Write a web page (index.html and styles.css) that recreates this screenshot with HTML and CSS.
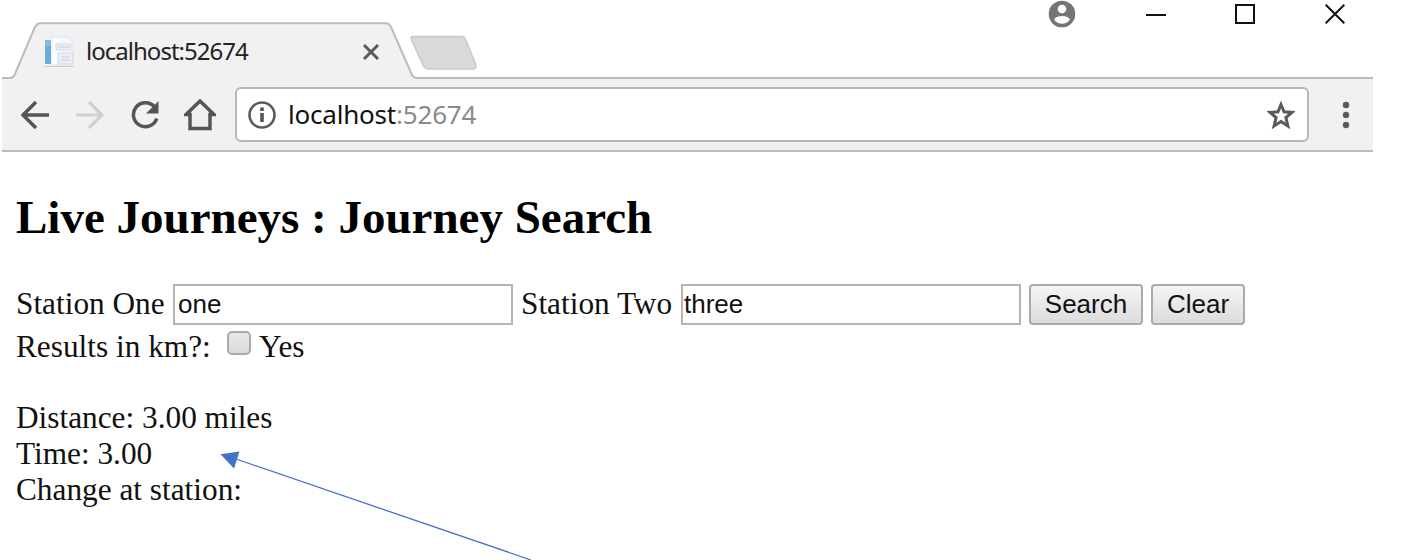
FILE: index.html
```html
<!DOCTYPE html>
<html lang="en">
<head>
<meta charset="utf-8">
<title>localhost:52674</title>
<link rel="stylesheet" href="styles.css">
</head>
<body>
<header class="browser">
  <div class="titlebar">
    <div class="tab">
      <svg class="tab-shape" width="490" height="80" viewBox="0 0 490 80">
        <path d="M0 80V78H8Q11 78 12.500 75L33 27Q35 23.200 38 23.200H384Q387 23.200 389 27L410 75Q411.500 78 415 78H490V80Z" fill="#f1f1f1"/>
        <path d="M0 78H8Q11 78 12.500 75L33 27Q35 23.200 38 23.200H384Q387 23.200 389 27L410 75Q411.500 78 415 78H490" fill="none" stroke="#bcbcbc" stroke-width="2"/>
        <path d="M411 36.500H460Q462.500 36.500 463.500 39L473.500 64Q475 69 471 69H427Q423 69 421.500 66L409.500 40Q408 36.500 411 36.500Z" fill="#d9d9d9" stroke="#c9c9c9" stroke-width="1.500"/>
      </svg>
      <svg class="favicon" width="32" height="32" viewBox="0 0 32 32">
        <path d="M7 2L9 1H23L29 7V29H7Z" fill="#f7f8fb" stroke="#e2e4e9"/>
        <path d="M1 4H7V28H1Z" fill="#68add9"/>
        <path d="M1 4H7V10H1Z" fill="#84bce1"/>
        <path d="M9 2H15V28H9Z" fill="#fcfdff"/>
        <path d="M12 8H27V14H12ZM14 17H29V28H14Z" fill="#eceef5" stroke="#d4d7e2"/>
        <path d="M14 11H26M17 21H26M17 24H26" stroke="#d3d7e4" stroke-width="1.500"/>
        <path d="M0 30.500H30" stroke="#c8ccd2"/>
      </svg>
      <span class="tab-title">localhost:52674</span>
      <svg class="tab-close" width="18" height="18" viewBox="0 0 18 18"><path d="M2 2L16 16M16 2L2 16" stroke="#5a5a5a" stroke-width="3"/></svg>
    </div>
    <div class="window-controls">
      <svg width="28" height="28" viewBox="0 0 28 28">
        <circle cx="14" cy="14" r="13.300" fill="#757575"/>
        <circle cx="14" cy="9" r="4.300" fill="#fff"/>
        <path d="M6 19.500C7.500 16.800 11 16 14 16S20.500 16.800 22 19.500C20 22.400 17 23.700 14 23.700S8 22.400 6 19.500Z" fill="#fff"/>
      </svg>
      <svg width="20" height="28" viewBox="0 0 20 28"><path d="M0 15H20" stroke="#111" stroke-width="2"/></svg>
      <svg width="20" height="28" viewBox="0 0 20 28"><path d="M1 5H19V23H1Z" fill="none" stroke="#111" stroke-width="2"/></svg>
      <svg width="20" height="28" viewBox="0 0 20 28"><path d="M.7 4.700L19.300 23.300M19.300 4.700L.7 23.300" stroke="#111" stroke-width="2"/></svg>
    </div>
  </div>
  <div class="toolbar">
    <svg class="nav" width="28" height="28" viewBox="0 0 28 28"><path d="M28 14H2M15 1L2 14L15 27" fill="none" stroke="#555" stroke-width="3.500"/></svg>
    <svg class="nav" width="28" height="28" viewBox="0 0 28 28"><path d="M0 14H26M13 1L26 14L13 27" fill="none" stroke="#d0d0d0" stroke-width="3.200"/></svg>
    <svg class="nav" width="28" height="28" viewBox="0 0 28 28"><path d="M23.500 5.800A12 12 0 1 0 25.800 17.500" fill="none" stroke="#555" stroke-width="3.500"/><path d="M27.500 0V12.500H15Z" fill="#555"/></svg>
    <svg class="nav-home" width="32" height="32" viewBox="0 0 32 32"><path d="M2 15.500L16 2L30 15.500H26V29.500H6V15.500Z" fill="none" stroke="#555" stroke-width="3.500"/></svg>
    <div class="address">
      <svg class="info" width="28" height="28" viewBox="0 0 28 28"><circle cx="14" cy="14" r="12.500" fill="none" stroke="#5a5a5a" stroke-width="2.600"/><path d="M14 12V21M14 6.500V10" stroke="#555" stroke-width="3.600"/></svg>
      <span class="url">localhost<span class="port">:52674</span></span>
      <svg class="star" width="28" height="28" viewBox="0 0 28 28"><path d="M14 3.500L17 10.800L25 11.400L18.900 16.500L20.900 25L14 20.600L7.100 25L9.100 16.500L3 11.400L11 10.800Z" fill="none" stroke="#5a5a5a" stroke-width="3"/></svg>
    </div>
    <svg class="menu" width="8" height="28" viewBox="0 0 8 28"><g fill="#5a5a5a"><circle cx="4" cy="4" r="3.200"/><circle cx="4" cy="14" r="3.200"/><circle cx="4" cy="24" r="3.200"/></g></svg>
  </div>
</header>
<main class="page">
  <h2 class="heading">Live Journeys : Journey Search</h2>
  <form class="search">
    <label class="label-one" for="one">Station One</label>
    <input class="field" id="one" type="text" value="one">
    <label class="label-two" for="two">Station Two</label>
    <input class="field" id="two" type="text" value="three">
    <button class="button search-button" type="button">Search</button>
    <button class="button clear-button" type="button">Clear</button>
  </form>
  <div class="units">
    <span class="units-label">Results in km?:</span>
    <input class="check" id="km" type="checkbox">
    <label class="yes" for="km">Yes</label>
  </div>
  <div class="results">
    <div>Distance: 3.00 miles</div>
    <div>Time: 3.00</div>
    <div>Change at station:</div>
  </div>
</main>
<svg class="pointer" width="340" height="110" viewBox="0 0 340 110">
  <path d="M15 9L310 110" stroke="#4472c4" stroke-width="1.300"/>
  <path d="M-.5 4.300L18.500 1.500L13 18.500Z" fill="#4472c4"/>
</svg>
</body>
</html>
```

FILE: styles.css
```css
* { box-sizing: border-box; }
body {
  margin: 0;
  height: 560px;
  position: relative;
  overflow: hidden;
  background: #fff;
  color: #111;
  font: 31.3px/36px "Liberation Serif", serif;
}
svg { display: block; flex: none; }
.browser { width: 1373px; padding-left: 2px; }
.titlebar {
  height: 79px;
  display: flex;
  justify-content: space-between;
  border-bottom: 2px solid #bcbcbc;
}
.tab { position: relative; width: 490px; display: flex; padding-left: 42px; }
.tab-shape { position: absolute; left: 0; top: 0; }
.favicon { position: relative; margin-top: 36px; }
.tab-title {
  position: relative;
  width: 163px;
  margin: 34px 0 0 10px;
  font: 24px/33px "Noto Sans", sans-serif;
  letter-spacing: -.98px;
  color: #222;
  white-space: nowrap;
}
.tab-close { position: relative; margin: 43px 0 0 113px; }
.window-controls { display: flex; padding-right: 28px; }
.window-controls svg:nth-child(2) { margin-left: 70px; }
.window-controls svg:nth-child(3) { margin-left: 69px; }
.window-controls svg:nth-child(4) { margin-left: 70px; }
.toolbar {
  height: 73px;
  padding: 8px 0 0 19px;
  display: flex;
  align-items: flex-start;
  background: #f1f1f1;
  border-bottom: 2px solid #bcbcbc;
}
.nav { margin: 14px 27px 0 0; }
.nav-home { margin: 12px 19px 0 -2px; }
.address {
  width: 1074px;
  height: 55px;
  display: flex;
  align-items: center;
  padding: 0 12px 0 11px;
  border: 2px solid #b8b8b8;
  border-radius: 6px;
  background: #fff;
}
.url {
  flex: 1;
  margin: -2px 0 0 12px;
  font: 26px/36px "Noto Sans", sans-serif;
  letter-spacing: -.2px;
  color: #111;
}
.port { color: #8a8a8a; }
.menu { margin: 14px 0 0 33px; }
.page { padding-left: 16px; }
.heading { margin: 38px 0 0; color: #000; font-size: 47px; line-height: 54px; font-weight: bold; }
.search { display: flex; margin-top: 40px; line-height: 40px; }
.label-one { width: 157px; }
.label-two { width: 168px; padding-left: 8px; }
.label-one, .label-two, .units, .results { white-space: nowrap; }
.field {
  width: 340px;
  height: 41px;
  padding: 0 3px 1px;
  border: 2px solid #b5b5b5;
  outline: none;
  background: #fff;
  color: #111;
  font: 26px "Liberation Sans", sans-serif;
}
.label-two + .field { padding-left: 1px; }
.button {
  height: 41px;
  padding: 0 0 1px;
  border: 2px solid #aaa;
  border-radius: 4px;
  background: linear-gradient(#f5f5f5, #dcdcdc);
  color: #111;
  font: 26px "Liberation Sans", sans-serif;
}
.search-button { width: 114px; margin-left: 8px; }
.clear-button { width: 94px; margin-left: 8px; }
.units { display: flex; margin-top: 4px; }
.units-label { width: 211px; }
.check {
  appearance: none;
  width: 24px;
  height: 24px;
  margin: 2px 8px 0 0;
  border: 2px solid #ababab;
  border-radius: 5px;
  background: linear-gradient(#e8e8e8, #dadada);
}
.results { margin-top: 35px; }
.pointer { position: absolute; left: 221px; top: 450px; overflow: visible; }
```
